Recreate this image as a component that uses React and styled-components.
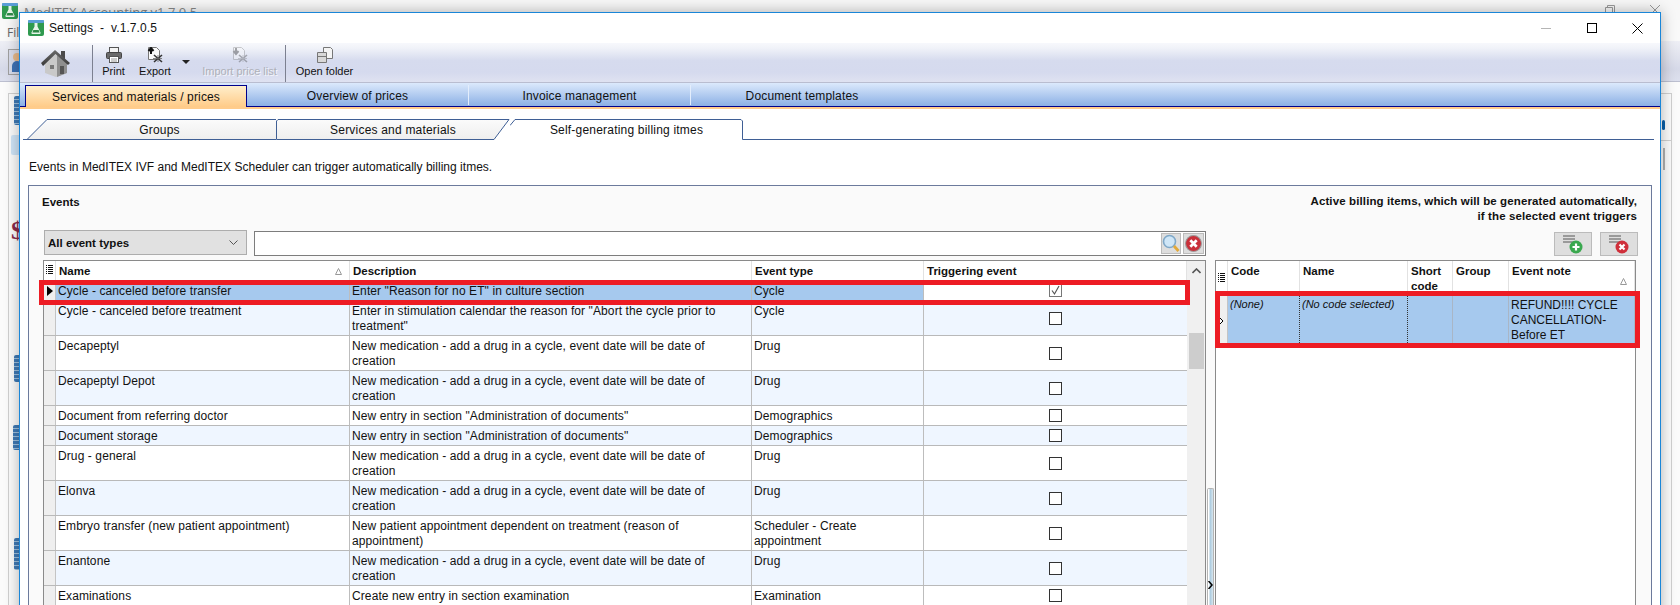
import React from 'react';
import styled, { createGlobalStyle } from 'styled-components';

const GlobalStyle = createGlobalStyle`
html, body {
    margin: 0;
    padding: 0;
    overflow: hidden;
    background: #f4f4f4;
}
* { box-sizing: border-box; }
`

const FONT = `"Liberation Sans", Arial, sans-serif`
const NEW_MED = 'New medication - add a drug in a cycle, event date will be date of creation'
const ADMIN_DOCS = 'New entry in section "Administration of documents"'

const eventRows = [
    { name: 'Cycle - canceled before transfer', description: 'Enter "Reason for no ET" in culture section', type: 'Cycle', checked: true, selected: true },
    { name: 'Cycle - canceled before treatment', description: 'Enter in stimulation calendar the reason for "Abort the cycle prior to treatment"', type: 'Cycle' },
    { name: 'Decapeptyl', description: NEW_MED, type: 'Drug' },
    { name: 'Decapeptyl Depot', description: NEW_MED, type: 'Drug' },
    { name: 'Document from referring doctor', description: ADMIN_DOCS, type: 'Demographics' },
    { name: 'Document storage', description: ADMIN_DOCS, type: 'Demographics' },
    { name: 'Drug - general', description: NEW_MED, type: 'Drug' },
    { name: 'Elonva', description: NEW_MED, type: 'Drug' },
    { name: 'Embryo transfer (new patient appointment)', description: 'New patient appointment dependent on treatment (reason of appointment)', type: 'Scheduler - Create appointment' },
    { name: 'Enantone', description: NEW_MED, type: 'Drug' },
    { name: 'Examinations', description: 'Create new entry in section examination', type: 'Examination' },
]

const EVENT_COLS = '12px 294px 402px 172px 263px'
const BILLING_COLS = '12px 72px 108px 45px 56px 126px'

/* ---------- page and the window behind ---------- */
const Page = styled.div`
position: relative;
width: 1680px;
height: 605px;
overflow: hidden;
font-family: ${FONT};
font-size: 12px;
color: #111;
`
const ParentWindow = styled.div`
height: 605px;
display: flex;
flex-direction: column;
background: #fbfbfb;
`
const ParentTitle = styled.div`
height: 20px;
display: flex;
align-items: flex-start;
padding: 3px 2px 0 2px;
background: #f7f7f7;
`
const ParentName = styled.div`
margin-left: 6px;
font-family: "Open Sans", sans-serif;
font-size: 13px;
line-height: 18px;
color: #888;
`
const ParentControls = styled.div`
margin-left: auto;
display: flex;
`
const ParentControl = styled.div`
width: 45.5px;
height: 14px;
display: flex;
justify-content: center;
align-items: center;
`
const ParentMenu = styled.div`
height: 21px;
padding: 5px 0 0 7px;
font-family: "Open Sans", sans-serif;
font-size: 12px;
line-height: 16px;
color: #666;
background: #f9f9f9;
`
const ParentToolbar = styled.div`
height: 41px;
padding: 8px 0 0 8px;
background: linear-gradient(#eeeff5, #d6d9e8 70%, #dde0ee);
border-bottom: 1px solid #bcbfd0;
`
const UserBox = styled.div`
width: 30px;
height: 26px;
border: 1px solid #a0a0a0;
background: #d8dcea;
display: flex;
padding-left: 3px;
align-items: center;
`
const ParentBody = styled.div`
flex: 1;
display: flex;
justify-content: space-between;
padding: 11px 8px 0 8px;
`
const Sidebar = styled.div`
width: 100px;
border: 1px solid #d0d0d0;
border-bottom: 0;
padding-left: 5px;
display: flex;
flex-direction: column;
`
const SideIcon = styled.div`
width: 30px;
height: ${props => props.$h}px;
margin-top: ${props => props.$top}px;
margin-left: ${props => props.$left || 0}px;
background: ${props => props.$plain
    ? props.$plain
    : 'repeating-linear-gradient(#3f7ab5 0 3px, #9fc0de 3px 4px)'};
border-radius: 2px;
`
const DollarSign = styled.div`
margin: 64px 0 0 -3px;
height: 24px;
font-family: "Liberation Serif", serif;
font-weight: bold;
font-size: 26px;
line-height: 24px;
color: #8a2a4a;
`
const SidePanel = styled.div`
width: 100px;
border: 1px solid #d0d0d0;
border-bottom: 0;
`
const SidePanelHead = styled.div`
height: 47px;
border-bottom: 1px solid #d0d0d0;
display: flex;
justify-content: flex-end;
align-items: flex-end;
padding: 0 6px 10px 0;
`
const SideKnob = styled.div`
width: 3px;
height: 10px;
border-radius: 2px;
background: #0b5fa8;
`
const SideGrey = styled.div`
width: 2px;
height: 22px;
margin: 7px 6px 0 auto;
background: #b0b0b0;
`

/* ---------- settings window ---------- */
const SettingsWindow = styled.div`
position: absolute;
left: 19px;
top: 12px;
width: 1642px;
height: 620px;
background: #fff;
border: 1px solid #1a86d8;
box-shadow: 0 0 14px rgba(0, 0, 0, 0.3);
display: flex;
flex-direction: column;
overflow: hidden;
`
const TitleBar = styled.div`
height: 30px;
flex: none;
display: flex;
align-items: center;
padding-left: 8px;
`
const TitleText = styled.div`
margin-left: 5px;
font-family: "Liberation Sans", sans-serif;
font-size: 12px;
white-space: pre;
letter-spacing: 0.1px;
color: #111;
`
const WinButtons = styled.div`
margin-left: auto;
display: flex;
`
const WinButton = styled.div`
width: 45.5px;
height: 30px;
display: flex;
justify-content: center;
align-items: center;
`
const Toolbar = styled.div`
height: 40px;
flex: none;
display: flex;
align-items: flex-start;
background: linear-gradient(#f7f8fc, #f1f3f9 12%, #d6dbee 45%, #d5daee 75%, #dfe2f1);
border-bottom: 1px solid #b9bdd0;
`
const HomeSlot = styled.div`
width: 72px;
height: 39px;
padding: 6px 0 0 21px;
`
const ToolSep = styled.div`
width: 1px;
height: 37px;
margin: 2px 0 0 ${props => props.$left || 0}px;
background: #7c8090;
`
const ToolButton = styled.div`
width: ${props => props.$w}px;
height: 39px;
display: flex;
flex-direction: column;
align-items: center;
padding-top: 4px;
font-size: 11px;
line-height: 13px;
white-space: nowrap;
color: ${props => props.$disabled ? '#aeb0b8' : '#111'};
text-shadow: ${props => props.$disabled ? '1px 1px 0 #f4f5fa' : 'none'};
svg { margin-bottom: 2px; opacity: ${props => props.$disabled ? 0.35 : 1}; }
`
const DropArrow = styled.div`
width: 20px;
display: flex;
justify-content: center;
margin-top: 17px;
&::after {
    content: '';
    border-left: 4px solid transparent;
    border-right: 4px solid transparent;
    border-top: 4px solid #222;
}
`
const MainTabs = styled.div`
height: 24px;
flex: none;
display: flex;
align-items: flex-end;
padding-left: 5px;
background: linear-gradient(#dce9fc, #8bb0e5);
border-bottom: 1px solid #00008b;
`
const MainTab = styled.div`
width: 222px;
height: ${props => props.$active ? 22 : 20}px;
margin-bottom: ${props => props.$active ? -1 : 1}px;
padding-top: ${props => props.$active ? 0 : 2}px;
display: flex;
justify-content: center;
align-items: center;
letter-spacing: 0.15px;
background: ${props => props.$active ? 'linear-gradient(#ffeecb, #ffcb88)' : 'transparent'};
border: ${props => props.$active ? '1px solid #00008b' : '0'};
border-bottom: 0;
border-right: ${props => props.$active ? '1px solid #00008b' : props.$last ? '0' : '1px solid #e3edfc'};
`
const OrangeLine = styled.div`
height: 2px;
flex: none;
background: #ffcc8c;
`
const Content = styled.div`
flex: 1;
display: flex;
flex-direction: column;
min-height: 0;
padding: 10px 8px 0 8px;
`
const SubTabs = styled.div`
height: 21px;
flex: none;
display: flex;
margin: 0 -5px 0 -5px;
padding-right: 3px;
`
const SubTabEdge = styled.div`
flex: ${props => props.$grow ? 1 : 'none'};
width: 4px;
border-bottom: 1px solid #3f5f95;
`
const SubTabShape = styled.div`
position: relative;
width: ${props => props.$w}px;
height: 21px;
display: flex;
justify-content: center;
align-items: center;
letter-spacing: 0.2px;
padding-left: ${props => props.$pad || 0}px;
svg { position: absolute; left: 0; top: 0; }
span { position: relative; }
`
const Hint = styled.div`
margin-top: 20px;
margin-left: 1px;
line-height: 15px;
letter-spacing: 0.02px;
`
const Panel = styled.div`
flex: 1;
min-height: 0;
margin-top: 10px;
border: 1px solid #6c7a9c;
background: #fafafa;
padding: 0 15px 0 14px;
display: flex;
`
const LeftColumn = styled.div`
width: 1163px;
flex: none;
display: flex;
flex-direction: column;
`
const PanelTitle = styled.div`
height: 44px;
margin-left: -1px;
padding-top: 9px;
font-weight: bold;
font-size: 11.5px;
line-height: 15px;
`
const FilterRow = styled.div`
height: 26px;
display: flex;
margin-bottom: 4px;
`
const TypeSelect = styled.div`
width: 203px;
height: 25px;
margin-left: 1px;
background: #e1e1e1;
border: 1px solid #adadad;
display: flex;
align-items: center;
justify-content: space-between;
padding: 0 8px 0 3px;
font-weight: bold;
font-size: 11.5px;
`
const SearchBox = styled.div`
flex: 1;
height: 25px;
margin: 1px 0 0 7px;
background: #fff;
border: 1px solid #7d7d7d;
display: flex;
justify-content: flex-end;
align-items: center;
gap: 2px;
padding: 0 1px 0 0;
`
const IconButton = styled.div`
width: ${props => props.$w}px;
height: ${props => props.$h}px;
background: #dedede;
border: 1px solid #bbb;
display: flex;
justify-content: center;
align-items: center;
`

/* ---------- grids ---------- */
const TableFrame = styled.div`
flex: 1;
display: flex;
border: 1px solid #8a8a8a;
background: #fff;
min-height: 0;
`
const TableMain = styled.div`
width: ${props => props.$w}px;
flex: none;
`
const HeaderRow = styled.div`
display: grid;
grid-template-columns: ${props => props.$cols};
height: ${props => props.$h}px;
border-bottom: 1px solid #b9b9b9;
background: #fff;
`
const HeaderCell = styled.div`
position: relative;
padding: 3px 3px 0 3px;
font-weight: bold;
font-size: 11.5px;
line-height: 15px;
border-right: 1px solid #e2e2e2;
`
const SortMark = styled.svg`
position: absolute;
right: ${props => props.$right}px;
bottom: ${props => props.$bottom}px;
`
const IndicatorHead = styled.div`
display: flex;
justify-content: center;
align-items: ${props => props.$center ? 'center' : 'flex-start'};
padding-top: ${props => props.$center ? 0 : 4}px;
border-right: 1px solid #e2e2e2;
`
const EventRow = styled.div`
position: relative;
display: grid;
grid-template-columns: ${EVENT_COLS};
border-bottom: 1px solid #b9b9b9;
background: ${props => props.$odd ? '#fff' : '#eff6ff'};
`
const IndicatorCell = styled.div`
background: #efefef;
border-right: 1px solid #c4c4c4;
display: flex;
justify-content: center;
align-items: center;
`
const Cell = styled.div`
padding: 3px 2px 1px 2px;
line-height: 15px;
letter-spacing: 0.1px;
border-right: 1px solid #bdbdbd;
background: ${props => props.$selected ? '#a6c9ee' : 'transparent'};
`
const TriggerCell = styled.div`
display: flex;
justify-content: center;
align-items: center;
background: ${props => props.$selected ? '#fff' : 'transparent'};
`
const CheckBox = styled.div`
width: 13px;
height: 13px;
display: flex;
justify-content: center;
align-items: center;
background: #fff;
border: 1px solid ${props => props.$checked ? '#777' : '#333'};
`
const RedMark = styled.div`
position: absolute;
left: ${props => props.$left}px;
right: ${props => props.$right}px;
top: ${props => props.$top}px;
bottom: ${props => props.$bottom}px;
border: 5px solid #ed1c24;
pointer-events: none;
z-index: 2;
`
const ScrollBar = styled.div`
width: 18px;
flex: none;
background: #f0f0f0;
display: flex;
flex-direction: column;
align-items: center;
`
const ScrollArrow = styled.div`
height: 19px;
display: flex;
align-items: center;
justify-content: center;
`
const ScrollThumb = styled.div`
width: 15px;
height: 36px;
margin-top: 53px;
background: #cdcdcd;
`
const Splitter = styled.div`
width: 9px;
flex: none;
padding: 302px 1px 0 1px;
`
const SplitHandle = styled.div`
position: relative;
height: 200px;
border: 1px solid #b4b4b4;
border-bottom: 0;
border-radius: 2px 2px 0 0;
background: linear-gradient(90deg, #fff 0 20%, #a9c9dd 40%, #d7e6ef 100%);
svg { position: absolute; left: 0; top: 92px; }
`
const RightColumn = styled.div`
width: 421px;
flex: none;
display: flex;
flex-direction: column;
`
const BillingNote = styled.div`
height: 46px;
padding-top: 8px;
margin-right: -1px;
text-align: right;
font-weight: bold;
font-size: 11.5px;
letter-spacing: 0.12px;
line-height: 15px;
`
const BillingButtons = styled.div`
height: 24px;
margin: 0 -2px 4px 0;
display: flex;
justify-content: flex-end;
gap: 8px;
`
const BillingRow = styled.div`
position: relative;
display: grid;
grid-template-columns: ${BILLING_COLS};
height: 47px;
background: #a6c9ee;
`
const BillingCell = styled.div`
padding: ${props => props.$italic ? 1 : 2}px 2px;
line-height: 15px;
font-size: ${props => props.$italic ? 11 : 12}px;
font-style: ${props => props.$italic ? 'italic' : 'normal'};
border-right: 1px ${props => props.$dotted ? 'dotted #333' : 'solid #a9b6c6'};
`

/* ---------- drawings ---------- */
const AppIcon = () => (
    <svg width="16" height="16" viewBox="0 0 16 16" style={{ flex: 'none' }}>
        <rect x="0" y="0" width="16" height="16" rx="2" fill="#2f9a4f" />
        <rect x="0" y="0" width="16" height="3" rx="1" fill="#5a9ed6" />
        <path d="M6.5 3h3v3.5L12.5 12.5a1 1 0 0 1-1 1.5h-7a1 1 0 0 1-1-1.5L6.5 6.5z" fill="#e8f5ea" />
        <path d="M5.4 10h5.2l1 2.5h-7.2z" fill="#2f8a48" />
    </svg>
)
const HomeIcon = () => (
    <svg width="29" height="28" viewBox="0 0 29 28" style={{ display: 'block' }}>
        <defs>
            <linearGradient id="homeRoof" x1="0" y1="0" x2="0" y2="1">
                <stop offset="0" stopColor="#6a6a6a" />
                <stop offset="1" stopColor="#3a3a3a" />
            </linearGradient>
        </defs>
        <rect x="20" y="2" width="4" height="8" fill="#4a4a4a" />
        <path d="M4 14v10l11 4 11-4V14L15 5z" fill="#c9c9c9" />
        <path d="M16 28l10-4V14L16 6z" fill="#8f8f8f" />
        <path d="M0 14L14 1l15 13-2 2L14.500 5 2 17z" fill="url(#homeRoof)" />
        <rect x="19" y="17" width="4" height="8" fill="#555" />
        <rect x="9" y="16" width="4" height="4" fill="#777" />
    </svg>
)
const PrintIcon = () => (
    <svg width="16" height="16" viewBox="0 0 16 16">
        <rect x="3.500" y="0.500" width="9" height="5" fill="#f4f4f4" stroke="#555" />
        <rect x="0.500" y="5.500" width="15" height="6" rx="1" fill="#6a6a6a" stroke="#444" />
        <rect x="3.500" y="9.500" width="9" height="6" fill="#fff" stroke="#555" />
        <path d="M5 12h6M5 14h6" stroke="#999" />
    </svg>
)
const SheetIcon = ({ down }) => (
    <svg width="16" height="16" viewBox="0 0 16 16">
        <path d="M1.500 0.500h8l3 3v9h-11z" fill="#fafafa" stroke="#777" />
        <path d={down ? 'M4 1v5M1.500 4L4 7l2.500-3' : 'M4 7V2M1.500 4L4 1l2.500 3'} stroke="#111" strokeWidth="2" fill="none" />
        <path d="M7 8l8 7M15 8l-8 7" stroke="#333" strokeWidth="1.600" />
        <path d="M6 11.500h9M11 8v7" stroke="#666" strokeWidth="0.800" />
    </svg>
)
const FolderIcon = () => (
    <svg width="16" height="16" viewBox="0 0 16 16">
        <path d="M6.500 0.500h7l2 2v9h-9z" fill="#f4f4f4" stroke="#777" />
        <path d="M0.500 5.500h9v10h-9z" fill="#d8d8d8" stroke="#777" />
        <path d="M1 9.500h8" stroke="#777" />
    </svg>
)
const ListGlyph = () => (
    <svg width="7" height="10" viewBox="0 0 7 10">
        <path d="M0 0.500h1M0 2.500h1M0 4.500h1M0 6.500h1M0 8.500h1M2 0.500h5M2 2.500h5M2 4.500h5M2 6.500h5M2 8.500h5" stroke="#111" />
    </svg>
)
const SortGlyph = ({ right, bottom }) => (
    <SortMark $right={right} $bottom={bottom} width="7" height="7" viewBox="0 0 7 7">
        <path d="M3.500 0.500L6.500 6.500h-6z" fill="none" stroke="#999" />
    </SortMark>
)
const SearchGlyph = () => (
    <svg width="18" height="19" viewBox="0 0 18 19">
        <circle cx="7.500" cy="7.500" r="6" fill="#cfe6f7" stroke="#7fa8c8" strokeWidth="1.600" />
        <path d="M12 12l4.500 5" stroke="#e2a93a" strokeWidth="2.800" />
    </svg>
)
const RedCross = ({ size = 17 }) => (
    <svg width={size} height={size} viewBox="0 0 16 16">
        <circle cx="8" cy="8" r="7.500" fill="#c9303a" stroke="#9c9c9c" />
        <path d="M5 5l6 6M11 5l-6 6" stroke="#fff" strokeWidth="2.600" />
    </svg>
)
const ListAction = ({ remove }) => (
    <svg width="20" height="20" viewBox="0 0 20 20">
        <path d="M0 2h12M0 5h12M0 8h12" stroke="#9a9a9a" strokeWidth="2" />
        <circle cx="13" cy="13" r="6.500" fill={remove ? '#cf2f3a' : '#3aa84f'} />
        {remove
            ? <path d="M10.500 10.500l5 5M15.500 10.500l-5 5" stroke="#fff" strokeWidth="2.200" />
            : <path d="M13 9.500v7M9.500 13h7" stroke="#fff" strokeWidth="2.200" />}
    </svg>
)

function SubTab({ w, path, fill, label, pad }) {
    return (
        <SubTabShape $w={w} $pad={pad}>
            <svg width={w} height="21">
                <defs>
                    <linearGradient id="subTabFill" x1="0" y1="0" x2="0" y2="1">
                        <stop offset="0" stopColor="#fbfbfb" />
                        <stop offset="1" stopColor="#eeeeee" />
                    </linearGradient>
                </defs>
                <path d={path} fill={fill} stroke="#3f5f95" />
            </svg>
            <span>{label}</span>
        </SubTabShape>
    )
}

export default function App() {
    return (
        <Page>
            <GlobalStyle />
            <ParentWindow>
                <ParentTitle>
                    <AppIcon />
                    <ParentName>MedITEX Accounting v1.7.0.5</ParentName>
                    <ParentControls>
                        <ParentControl>
                            <svg width="10" height="10"><path d="M0 8.500h10" stroke="#999" /></svg>
                        </ParentControl>
                        <ParentControl>
                            <svg width="10" height="10"><path d="M0.500 2.500h7v7h-7zM2.500 2.500v-2h7v7h-2" fill="none" stroke="#999" /></svg>
                        </ParentControl>
                        <ParentControl>
                            <svg width="10" height="10"><path d="M0 0l10 10M10 0L0 10" stroke="#999" /></svg>
                        </ParentControl>
                    </ParentControls>
                </ParentTitle>
                <ParentMenu>File</ParentMenu>
                <ParentToolbar>
                    <UserBox>
                        <svg width="10" height="20" viewBox="0 0 10 20">
                            <circle cx="5" cy="5" r="4" fill="#e6b98a" />
                            <path d="M0 20v-6a5 5 0 0 1 10 0v6z" fill="#3f72b5" />
                        </svg>
                    </UserBox>
                </ParentToolbar>
                <ParentBody>
                    <Sidebar>
                        <SideIcon $h={29} $top={2} />
                        <SideIcon $h={20} $top={10} $left={-3} $plain="#cfe4f7" />
                        <DollarSign>$</DollarSign>
                        <SideIcon $h={27} $top={112} />
                        <SideIcon $h={25} $top={43} $left={-1} />
                        <SideIcon $h={32} $top={88} />
                    </Sidebar>
                    <SidePanel>
                        <SidePanelHead><SideKnob /></SidePanelHead>
                        <SideGrey />
                    </SidePanel>
                </ParentBody>
            </ParentWindow>

            <SettingsWindow>
                <TitleBar>
                    <AppIcon />
                    <TitleText>Settings  -  v.1.7.0.5</TitleText>
                    <WinButtons>
                        <WinButton>
                            <svg width="10" height="10"><path d="M0 5.500h10" stroke="#b5b5b5" /></svg>
                        </WinButton>
                        <WinButton>
                            <svg width="10" height="10"><rect x="0.500" y="0.500" width="9" height="9" fill="none" stroke="#000" /></svg>
                        </WinButton>
                        <WinButton>
                            <svg width="11" height="11"><path d="M0.500 0.500l10 10M10.500 0.500l-10 10" stroke="#000" /></svg>
                        </WinButton>
                    </WinButtons>
                </TitleBar>

                <Toolbar>
                    <HomeSlot><HomeIcon /></HomeSlot>
                    <ToolSep />
                    <ToolButton $w={41}><PrintIcon />Print</ToolButton>
                    <ToolButton $w={42}><SheetIcon />Export</ToolButton>
                    <DropArrow />
                    <ToolButton $w={87} $disabled><SheetIcon down />Import price list</ToolButton>
                    <ToolSep $left={2} />
                    <ToolButton $w={77}><FolderIcon />Open folder</ToolButton>
                </Toolbar>

                <MainTabs>
                    <MainTab $active>Services and materials / prices</MainTab>
                    <MainTab>Overview of prices</MainTab>
                    <MainTab>Invoice management</MainTab>
                    <MainTab $last>Document templates</MainTab>
                </MainTabs>
                <OrangeLine />

                <Content>
                    <SubTabs>
                        <SubTabEdge />
                        <SubTab w={249} fill="url(#subTabFill)" label="Groups" pad={16}
                            path="M0 20.500L20 0.500H249.500V20.500z" />
                        <SubTab w={234} fill="url(#subTabFill)" label="Services and materials"
                            path="M0.500 20.500V2L2 0.500H233L218 20.500z" />
                        <SubTab w={233} fill="#fff" label="Self-generating billing itmes"
                            path="M0 6.500L5 0.500H231L232.500 2V20.500H233" />
                        <SubTabEdge $grow />
                    </SubTabs>

                    <Hint>Events in MedITEX IVF and MedITEX Scheduler can trigger automatically billing itmes.</Hint>

                    <Panel>
                        <LeftColumn>
                            <PanelTitle>Events</PanelTitle>
                            <FilterRow>
                                <TypeSelect>
                                    All event types
                                    <svg width="9" height="6" viewBox="0 0 9 6"><path d="M0.500 0.500L4.500 4.500L8.500 0.500" fill="none" stroke="#555" /></svg>
                                </TypeSelect>
                                <SearchBox>
                                    <IconButton $w={20} $h={21}><SearchGlyph /></IconButton>
                                    <IconButton $w={21} $h={21}><RedCross /></IconButton>
                                </SearchBox>
                            </FilterRow>
                            <TableFrame>
                                <TableMain $w={1143}>
                                    <HeaderRow $cols={EVENT_COLS} $h={20}>
                                        <IndicatorHead><ListGlyph /></IndicatorHead>
                                        <HeaderCell>Name<SortGlyph right={7} bottom={5} /></HeaderCell>
                                        <HeaderCell>Description</HeaderCell>
                                        <HeaderCell>Event type</HeaderCell>
                                        <HeaderCell>Triggering event</HeaderCell>
                                    </HeaderRow>
                                    {eventRows.map((row, i) => (
                                        <EventRow key={row.name} $odd={i % 2 === 0}>
                                            <IndicatorCell>
                                                {row.selected && (
                                                    <svg width="6" height="10" viewBox="0 0 6 10"><path d="M0 0l6 5-6 5z" fill="#000" /></svg>
                                                )}
                                            </IndicatorCell>
                                            <Cell $selected={row.selected}>{row.name}</Cell>
                                            <Cell $selected={row.selected}>{row.description}</Cell>
                                            <Cell $selected={row.selected}>{row.type}</Cell>
                                            <TriggerCell $selected={row.selected}>
                                                <CheckBox $checked={row.checked}>
                                                    {row.checked && (
                                                        <svg width="11" height="11" viewBox="0 0 11 11"><path d="M2 5.500L4.500 9L9 1" fill="none" stroke="#555" strokeWidth="1.200" /></svg>
                                                    )}
                                                </CheckBox>
                                            </TriggerCell>
                                            {row.selected && <RedMark $left={-5} $right={-3} $top={-1} $bottom={-5} />}
                                        </EventRow>
                                    ))}
                                </TableMain>
                                <ScrollBar>
                                    <ScrollArrow>
                                        <svg width="9" height="6" viewBox="0 0 9 6"><path d="M0.500 5L4.500 1L8.500 5" fill="none" stroke="#555" strokeWidth="1.600" /></svg>
                                    </ScrollArrow>
                                    <ScrollThumb />
                                </ScrollBar>
                            </TableFrame>
                        </LeftColumn>

                        <Splitter>
                            <SplitHandle>
                                <svg width="5" height="8" viewBox="0 0 5 8"><path d="M0.500 0L4 4L0.500 8" fill="none" stroke="#000" strokeWidth="1.500" /></svg>
                            </SplitHandle>
                        </Splitter>

                        <RightColumn>
                            <BillingNote>
                                Active billing items, which will be generated automatically,<br />
                                if the selected event triggers
                            </BillingNote>
                            <BillingButtons>
                                <IconButton $w={38} $h={24}><ListAction /></IconButton>
                                <IconButton $w={38} $h={24}><ListAction remove /></IconButton>
                            </BillingButtons>
                            <TableFrame>
                                <TableMain $w={419}>
                                    <HeaderRow $cols={BILLING_COLS} $h={35}>
                                        <IndicatorHead $center><ListGlyph /></IndicatorHead>
                                        <HeaderCell>Code</HeaderCell>
                                        <HeaderCell>Name</HeaderCell>
                                        <HeaderCell>Short code</HeaderCell>
                                        <HeaderCell>Group</HeaderCell>
                                        <HeaderCell>Event note<SortGlyph right={7} bottom={10} /></HeaderCell>
                                    </HeaderRow>
                                    <BillingRow>
                                        <IndicatorCell>
                                            <svg width="5" height="8" viewBox="0 0 5 8"><path d="M0.500 0.500L4 4L0.500 7.500z" fill="#fff" stroke="#000" /></svg>
                                        </IndicatorCell>
                                        <BillingCell $italic $dotted>(None)</BillingCell>
                                        <BillingCell $italic $dotted>(No code selected)</BillingCell>
                                        <BillingCell />
                                        <BillingCell />
                                        <BillingCell>REFUND!!!! CYCLE CANCELLATION-Before ET</BillingCell>
                                        <RedMark $left={-1} $right={-5} $top={-5} $bottom={-5} />
                                    </BillingRow>
                                </TableMain>
                            </TableFrame>
                        </RightColumn>
                    </Panel>
                </Content>
            </SettingsWindow>
        </Page>
    )
}
